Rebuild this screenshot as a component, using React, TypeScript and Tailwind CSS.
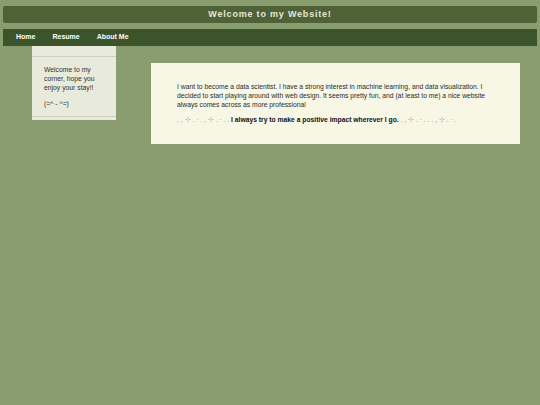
export default function App() {
  return (
    <div className="min-h-[405px] w-[540px] bg-[#8a9d6e] pt-[6px] font-['Liberation_Sans',Arial,sans-serif]">
      <header className="mx-[3px] flex h-[17px] items-center justify-center rounded-[2px] bg-[#4e6137]">
        <h1 className="text-[9px] font-bold tracking-[0.8px] text-[#e6ead6]">Welcome to my Website!</h1>
      </header>
      <nav className="mx-[3px] mt-[6px] flex h-[17px] items-center gap-[17px] bg-[#3c542b] pl-[13px] text-[7px] font-bold text-white">
        <span>Home</span>
        <span>Resume</span>
        <span>About Me</span>
      </nav>
      <div className="flex items-start">
        <aside className="ml-[32px] w-[84px] bg-[#e8eadb] pt-[10px] pb-[3px]">
          <div className="border-y border-[#cdd0bf] px-[12px] pt-[8px] pb-[8px] text-[6.8px] leading-[9px] text-[#333]">
            <p>Welcome to my corner, hope you enjoy your stay!!</p>
            <p className="mt-[7px]">(=^ - ^=)</p>
          </div>
        </aside>
        <main className="ml-[35px] mt-[17px] w-[369px] bg-[#f8f7e6] px-[26px] pt-[19px] pb-[20px] text-[6.75px] leading-[9px] text-[#2a2a2a]">
          <p>
            I want to become a data scientist. I have a strong interest in machine learning, and data visualization. I
            decided to start playing around with web design. It seems pretty fun, and (at least to me) a nice website
            always comes across as more professional
          </p>
          <p className="mt-[6px]">
            <span className="text-[#888]">. , ⊹ . · . , ⊹ . · . . </span>
            <strong className="text-[#111]">I always try to make a positive impact wherever I go.</strong>
            <span className="text-[#888]"> . , ⊹ . · . . . , ⊹ . · .</span>
          </p>
        </main>
      </div>
    </div>
  )
}
